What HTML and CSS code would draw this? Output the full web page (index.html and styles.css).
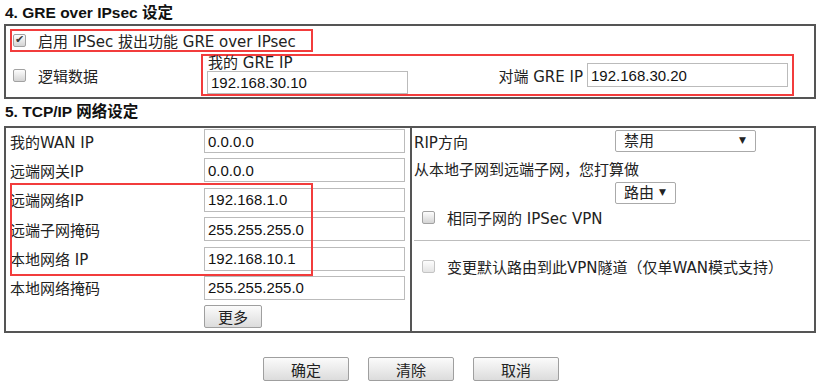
FILE: index.html
```html
<!DOCTYPE html>
<html lang="zh-CN">
<head>
<meta charset="UTF-8">
<title>GRE over IPsec 设定</title>
<link rel="stylesheet" href="styles.css">
</head>
<body>

<h2 class="section-title">4. GRE over IPsec 设定</h2>
<div class="box box-gre">
  <div class="gre-row">
    <label class="check mark mark-enable"><input type="checkbox" checked> 启用 IPSec 拔出功能 GRE over IPsec</label>
  </div>
  <div class="gre-row gre-row-ip">
    <label class="check logic"><input type="checkbox"> 逻辑数据</label>
    <div class="mark mark-ip">
      <div class="my-ip">
        <span class="my-ip-label">我的 GRE IP</span>
        <input type="text" class="field" value="192.168.30.10">
      </div>
      <div class="peer-ip">
        <span>对端 GRE IP</span>
        <input type="text" class="field" value="192.168.30.20">
      </div>
    </div>
  </div>
</div>

<h2 class="section-title">5. TCP/IP 网络设定</h2>
<div class="box box-tcp">
  <div class="tcp-left">
    <span class="tcp-label">我的WAN IP</span><input type="text" class="field" value="0.0.0.0">
    <span class="tcp-label">远端网关IP</span><input type="text" class="field" value="0.0.0.0">
    <span class="tcp-label">远端网络IP</span><input type="text" class="field" value="192.168.1.0">
    <span class="tcp-label">远端子网掩码</span><input type="text" class="field" value="255.255.255.0">
    <span class="tcp-label">本地网络 IP</span><input type="text" class="field" value="192.168.10.1">
    <span class="tcp-label">本地网络掩码</span><input type="text" class="field" value="255.255.255.0">
    <span></span><div><button class="btn btn-more">更多</button></div>
    <div class="mark mark-net"></div>
  </div>

  <div class="tcp-right">
    <div class="rip-row">
      <span class="rip-label">RIP方向</span>
      <div class="select select-rip"><select><option>禁用</option></select></div>
    </div>
    <div class="route-text">从本地子网到远端子网，您打算做</div>
    <div class="route-row">
      <div class="select select-route"><select><option>路由</option></select></div>
    </div>
    <label class="check check-same"><input type="checkbox"> 相同子网的 IPSec VPN</label>
    <hr class="divider">
    <label class="check check-default"><input type="checkbox" disabled> 变更默认路由到此VPN隧道（仅单WAN模式支持）</label>
  </div>
</div>

<div class="actions">
  <button class="btn btn-action">确定</button>
  <button class="btn btn-action">清除</button>
  <button class="btn btn-action">取消</button>
</div>

</body>
</html>
```

FILE: styles.css
```css
body {
  margin: 0;
  font-family: "DejaVu Sans", "Noto Sans CJK SC", sans-serif;
  font-size: 15px;
  color: #222;
  background: #fff;
}

.section-title {
  margin: 0;
  padding-left: 5px;
  height: 24px;
  font: bold 15.5px/25px "Liberation Sans", "Noto Sans CJK SC", sans-serif;
  color: #111;
}

.box {
  margin-left: 4px;
  width: 812px;
  box-sizing: border-box;
  border: 2px solid #555;
}

/* marcas vermelhas */
.mark {
  border: 2px solid #f23c3c;
  box-sizing: border-box;
}

/* bloco GRE */
.box-gre {
  height: 75px;
  padding: 3px 0 0 4px;
}
.gre-row {
  display: flex;
  align-items: center;
}
.mark-enable {
  width: 303px;
  height: 23px;
  padding-left: 1px;
}
.gre-row-ip {
  margin-top: 2px;
}
.logic {
  width: 191px;
  box-sizing: border-box;
  padding-left: 3px;
}
.mark-ip {
  width: 593px;
  height: 42px;
  display: flex;
  align-items: center;
}
.my-ip {
  align-self: flex-start;
  padding-left: 4px;
}
.my-ip-label {
  display: block;
  height: 13px;
  line-height: 13px;
  margin: 1px 0 1px 1px;
}
.my-ip .field {
  height: 23px;
}
.peer-ip {
  margin-left: auto;
  margin-right: 4px;
  display: flex;
  align-items: center;
  gap: 4px;
}

.field {
  width: 201px;
  height: 24px;
  box-sizing: border-box;
  border: 1px solid #bbb;
  padding: 0 3px;
  font: 15px "Liberation Sans", sans-serif;
  color: #111;
  background: #fff;
}

/* checkbox */
.check {
  display: flex;
  align-items: center;
  white-space: nowrap;
}
.check input {
  appearance: none;
  margin: 0 12px 0 0;
  width: 13px;
  height: 13px;
  border: 1px solid #a2a2a2;
  border-radius: 2px;
  background: linear-gradient(#fdfdfd, #d4d4d4);
  position: relative;
  flex: none;
}
.check input:checked::after {
  content: "✔";
  position: absolute;
  left: 1px;
  top: -2px;
  font-size: 11px;
  color: #3a3a3a;
}
.check input:disabled {
  border-color: #c4c4c4;
  background: linear-gradient(#fdfdfd, #e4e4e4);
}

/* bloco TCP/IP */
.box-tcp {
  margin-top: 3px;
  height: 207px;
  display: grid;
  grid-template-columns: 406px 1fr;
}
.tcp-left {
  position: relative;
  border-right: 2px solid #555;
  padding: 1px 0 0 4px;
  display: grid;
  grid-template-columns: 194px 201px;
  grid-auto-rows: 24px;
  row-gap: 5.4px;
  align-items: center;
}
.tcp-label {
  white-space: nowrap;
}
.mark-net {
  position: absolute;
  left: 4px;
  top: 55px;
  width: 303px;
  height: 93px;
}
.btn-more {
  width: 58px;
  height: 23px;
  margin-top: -2px;
}

.tcp-right {
  padding: 2px 0 0 2px;
}
.rip-row {
  display: flex;
  align-items: center;
  height: 22px;
}
.rip-label {
  width: 201px;
}
.route-text {
  margin-top: 7px;
  height: 22px;
  line-height: 22px;
}
.route-row {
  margin: 1px 0 0 201px;
  height: 22px;
}
.select {
  position: relative;
  height: 22px;
}
.select select {
  appearance: none;
  width: 100%;
  height: 22px;
  border: 1px solid #aaa;
  border-radius: 2px;
  background: #fff;
  padding: 0 0 0 8px;
  font: 15px "DejaVu Sans", "Noto Sans CJK SC", sans-serif;
  color: #222;
}
.select::after {
  content: "▼";
  position: absolute;
  right: 10px;
  top: 5px;
  font-size: 9px;
  color: #222;
  pointer-events: none;
}
.select-rip {
  width: 141px;
}
.select-route {
  width: 61px;
}
.check-same {
  margin-top: 2px;
  height: 22px;
  padding-left: 8px;
}
.divider {
  margin: 12px 4px 0 0;
  border: 0;
  border-top: 1px solid #bdbdbd;
}
.check-default {
  margin-top: 14px;
  height: 22px;
  padding-left: 8px;
}

/* botoes */
.btn {
  background: linear-gradient(#fbfbfb, #dcdcdc);
  border: 1px solid #9f9f9f;
  border-radius: 2px;
  font: 15px "DejaVu Sans", "Noto Sans CJK SC", sans-serif;
  color: #222;
  padding: 0;
  cursor: pointer;
}
.actions {
  margin-top: 24px;
  display: flex;
  justify-content: center;
  gap: 19px;
}
.btn-action {
  width: 86px;
  height: 24px;
}
```
